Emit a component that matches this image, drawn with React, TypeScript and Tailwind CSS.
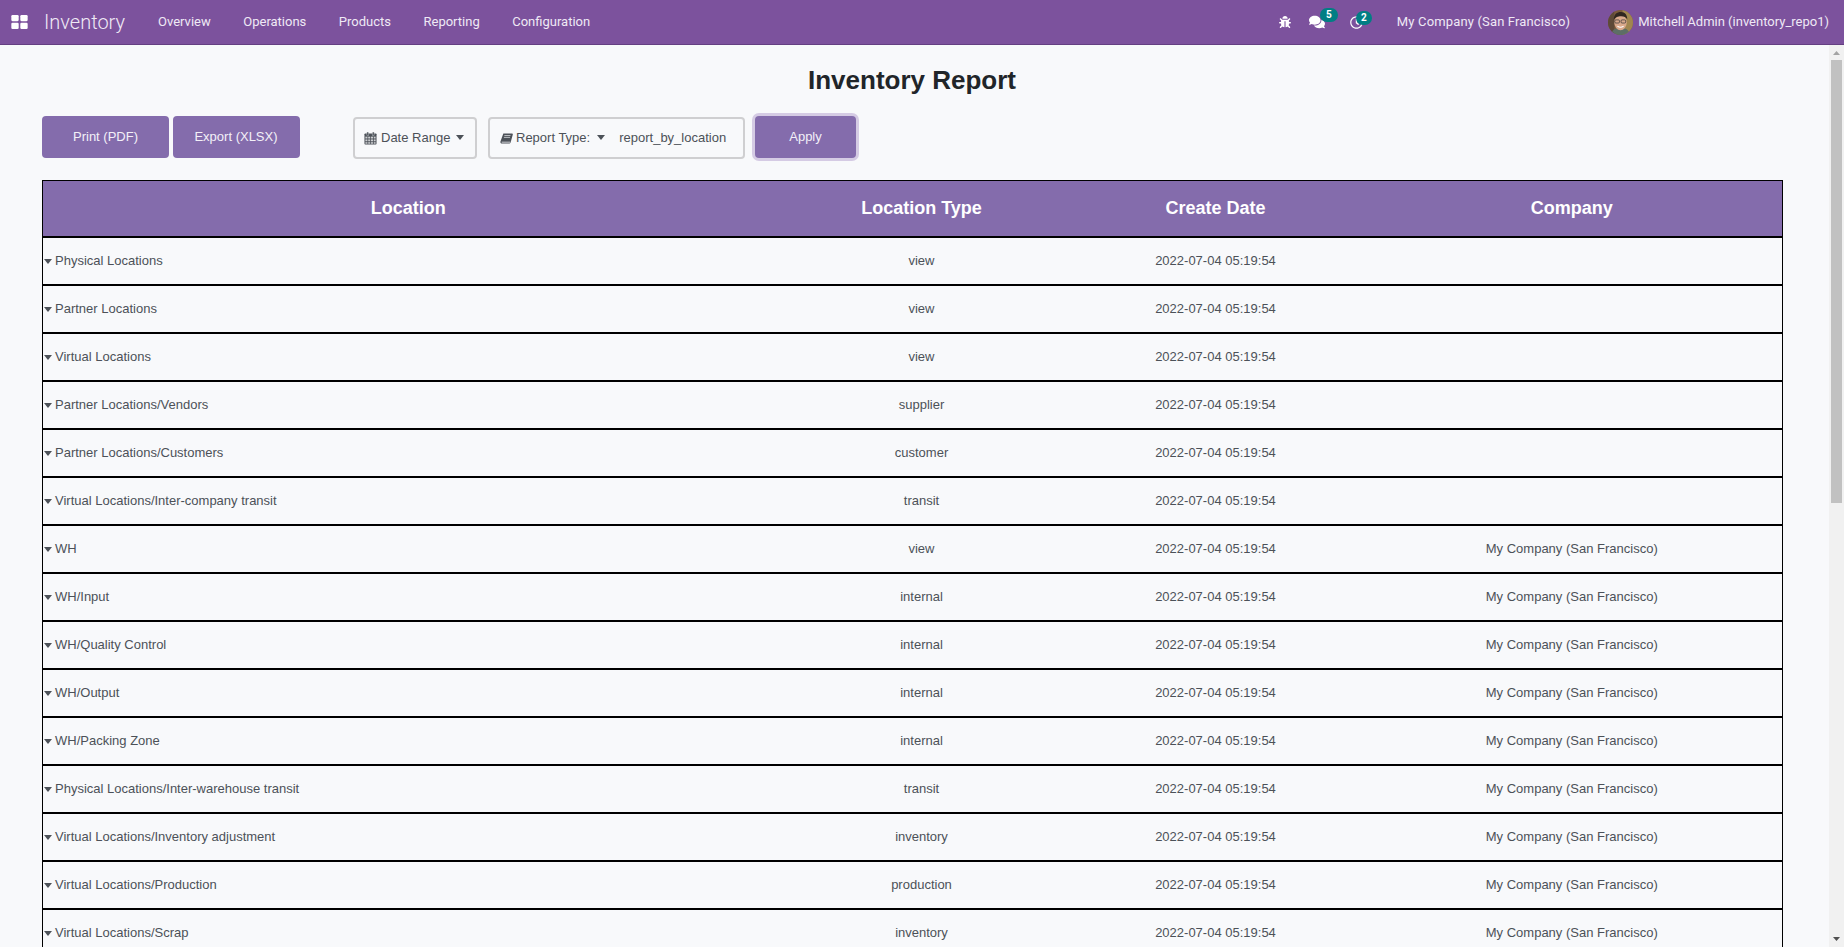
import React from "react";
import { FaBug, FaComments, FaRegClock } from "react-icons/fa";

const C = "My Company (San Francisco)";
const rows: [string, string, string][] = [
  ["Physical Locations", "view", ""],
  ["Partner Locations", "view", ""],
  ["Virtual Locations", "view", ""],
  ["Partner Locations/Vendors", "supplier", ""],
  ["Partner Locations/Customers", "customer", ""],
  ["Virtual Locations/Inter-company transit", "transit", ""],
  ["WH", "view", C],
  ["WH/Input", "internal", C],
  ["WH/Quality Control", "internal", C],
  ["WH/Output", "internal", C],
  ["WH/Packing Zone", "internal", C],
  ["Physical Locations/Inter-warehouse transit", "transit", C],
  ["Virtual Locations/Inventory adjustment", "inventory", C],
  ["Virtual Locations/Production", "production", C],
  ["Virtual Locations/Scrap", "inventory", C],
];

const Caret = () => (
  <span className="inline-block w-0 h-0 border-x-[4.5px] border-t-[5px] border-x-transparent border-t-current align-middle" />
);

const Avatar = () => (
  <svg viewBox="0 0 24 24" className="w-[25px] h-[25px] rounded-full shrink-0">
    <rect width="24" height="24" fill="#7a5a3a" />
    <rect x="14" y="0" width="10" height="24" fill="#a08650" />
    <rect x="0" y="0" width="6" height="24" fill="#5e4a38" />
    <path d="M3 24c1-6 5-7 9-7s8 1 9 7z" fill="#5d6e66" />
    <ellipse cx="12" cy="12" rx="6" ry="7.500" fill="#d9a98c" />
    <path d="M5.500 10c0-6 3-8 7-8s6 3 6 7c-1-2-3-3-6-3s-6 1-7 4z" fill="#2f2620" />
    <rect x="6.500" y="9.500" width="4.500" height="3" rx="1" fill="none" stroke="#3a3a3a" strokeWidth="0.7" />
    <rect x="12.500" y="9.500" width="4.500" height="3" rx="1" fill="none" stroke="#3a3a3a" strokeWidth="0.7" />
    <path d="M9 15.500c2 1.500 4 1.500 6 0" stroke="#fff" strokeWidth="1" fill="none" />
  </svg>
);

const CalendarIcon = () => (
  <svg viewBox="0 0 14 14" className="w-[13px] h-[13px] shrink-0">
    <rect x="0.5" y="1.5" width="13" height="12" rx="1" fill="currentColor" />
    <rect x="3" y="0" width="2" height="4" rx="0.8" fill="currentColor" stroke="#f8f9fb" strokeWidth="0.4" />
    <rect x="9" y="0" width="2" height="4" rx="0.8" fill="currentColor" stroke="#f8f9fb" strokeWidth="0.4" />
    <g fill="#f8f9fb" opacity="0.75">
      <rect x="1.5" y="5" width="2.200" height="2" />
      <rect x="4.500" y="5" width="2.200" height="2" />
      <rect x="7.500" y="5" width="2.200" height="2" />
      <rect x="10.500" y="5" width="2" height="2" />
      <rect x="1.5" y="8" width="2.200" height="2" />
      <rect x="4.500" y="8" width="2.200" height="2" />
      <rect x="7.500" y="8" width="2.200" height="2" />
      <rect x="10.500" y="8" width="2" height="2" />
      <rect x="1.5" y="11" width="2.200" height="1.600" />
      <rect x="4.500" y="11" width="2.200" height="1.600" />
      <rect x="7.500" y="11" width="2.200" height="1.600" />
      <rect x="10.500" y="11" width="2" height="1.600" />
    </g>
  </svg>
);

const BookIcon = () => (
  <svg viewBox="0 0 14 14" className="w-[13px] h-[13px] shrink-0">
    <path
      d="M3.600 1.500h9.400c.7 0 1 .5.8 1.200l-2.300 8.300c-.3 1-.9 1.500-2 1.500H2.300C1 12.500.2 11.500.5 10.200z"
      fill="currentColor"
    />
    <path d="M1.800 10.400h9.300l-.3 1H2.500c-.7 0-.9-.5-.7-1z" fill="#f8f9fb" />
    <path d="M4.700 3.800h6.600M4.200 5.800h6.600" stroke="#f8f9fb" strokeWidth="0.7" />
  </svg>
);

const ScrollBar = () => (
  <aside className="w-[15px] shrink-0 bg-[#f1f1f1] flex flex-col">
    <svg viewBox="0 0 15 15" className="w-[15px] h-[15px] shrink-0 fill-[#a3a3a3]">
      <polygon points="4,10 11,10 7.500,6" />
    </svg>
    <div className="h-[443px] mx-[2px] bg-[#c1c1c1]" />
    <div className="flex-1" />
    <svg viewBox="0 0 15 15" className="w-[15px] h-[15px] shrink-0 fill-[#505050]">
      <polygon points="4,5 11,5 7.500,9" />
    </svg>
  </aside>
);

export default function App() {
  return (
    <div className="h-screen flex flex-col overflow-hidden bg-[#f8f9fb] [font-family:Liberation_Sans,sans-serif]">
      <nav className="h-[45px] shrink-0 flex items-center bg-[#7c529d] border-b border-[#643f82] text-[#efe9f5] [font-family:Roboto,sans-serif] text-[13px]">
        <svg viewBox="0 0 14 12" className="w-[17px] h-[14px] ml-[11px] fill-white">
          <rect x="0" y="0" width="6.3" height="5.3" rx="1" />
          <rect x="7.7" y="0" width="6.3" height="5.300" rx="1" />
          <rect x="0" y="6.7" width="6.3" height="5.3" rx="1" />
          <rect x="7.700" y="6.7" width="6.3" height="5.3" rx="1" />
        </svg>
        <span className="ml-[16px] text-[20px] font-light leading-none">Inventory</span>
        <div className="flex ml-[33px] gap-[32.5px]">
          <span>Overview</span>
          <span>Operations</span>
          <span>Products</span>
          <span>Reporting</span>
          <span>Configuration</span>
        </div>
        <div className="ml-auto flex items-center">
          <FaBug className="text-white w-[12px] h-[12px]" />
          <span className="relative ml-[18px] block">
            <FaComments className="text-white w-[16px] h-[16px]" />
            <span className="absolute -top-[6px] left-[11px] h-[14px] w-[18px] rounded-full bg-[#017e84] text-white text-[10px] font-bold leading-[14px] text-center">5</span>
          </span>
          <span className="relative ml-[25px] block">
            <FaRegClock className="text-white w-[13px] h-[13px]" />
            <span className="absolute -top-[5px] left-[6px] h-[14px] w-[16px] rounded-full bg-[#017e84] text-white text-[10px] font-bold leading-[14px] text-center">2</span>
          </span>
          <span className="ml-[34px] tracking-[0.15px]">My Company (San Francisco)</span>
          <span className="ml-[38px]"><Avatar /></span>
          <span className="ml-[5px] mr-[15px]">Mitchell Admin (inventory_repo1)</span>
        </div>
      </nav>
      <div className="flex-1 flex min-h-0">
        <main className="flex-1 min-w-0 overflow-hidden text-[13px] text-[#4c5158]">
          <h1 className="text-center text-[26px] font-bold text-[#212529] leading-[32px] mt-[19px] pr-[5px]">Inventory Report</h1>
          <div className="flex items-center mt-[19px] ml-[42px]">
            <button className="w-[127px] h-[42px] rounded bg-[#846cac] text-[#f3f0f8]">Print (PDF)</button>
            <button className="ml-[4px] w-[127px] h-[42px] pr-[1px] rounded bg-[#846cac] text-[#f3f0f8]">Export (XLSX)</button>
            <div className="ml-[53px] w-[124px] h-[42px] mt-[2px] pl-[9px] rounded border-2 border-[#cfcfd1] flex items-center gap-[4px]">
              <CalendarIcon />
              <span>Date Range</span>
              <span className="ml-[2px] -mt-[2px]"><Caret /></span>
            </div>
            <div className="ml-[11px] w-[257px] h-[42px] mt-[2px] rounded border-2 border-[#cfcfd1] flex items-center pl-[10px] gap-[3px]">
              <BookIcon />
              <span>Report Type:</span>
              <span className="ml-[4px] -mt-[2px]"><Caret /></span>
              <span className="ml-[11px]">report_by_location</span>
            </div>
            <button className="ml-[10px] w-[101px] h-[42px] rounded bg-[#846cac] text-[#f3f0f8] ring-[3px] ring-[#d5cbe4]">Apply</button>
          </div>
          <div className="mt-[21px] ml-[42px] w-[1740px]">
            <table className="w-full table-fixed border-collapse border border-black">
              <colgroup>
                <col className="w-[731px]" />
                <col className="w-[296px]" />
                <col className="w-[292px]" />
                <col className="w-[421px]" />
              </colgroup>
              <thead>
                <tr className="h-[56px] bg-[#846cac] text-white text-[18px] font-bold">
                  <th className="font-bold border-b-2 border-black">Location</th>
                  <th className="font-bold border-b-2 border-black">Location Type</th>
                  <th className="font-bold border-b-2 border-black">Create Date</th>
                  <th className="font-bold border-b-2 border-black">Company</th>
                </tr>
              </thead>
              <tbody>
                {rows.map((r) => (
                  <tr key={r[0]} className="h-[48px] border-b-2 border-black">
                    <td className="pl-[1px]">
                      <Caret />
                      <span className="ml-[3px]">{r[0]}</span>
                    </td>
                    <td className="text-center">{r[1]}</td>
                    <td className="text-center">2022-07-04 05:19:54</td>
                    <td className="text-center">{r[2]}</td>
                  </tr>
                ))}
              </tbody>
            </table>
          </div>
        </main>
        <ScrollBar />
      </div>
    </div>
  );
}
